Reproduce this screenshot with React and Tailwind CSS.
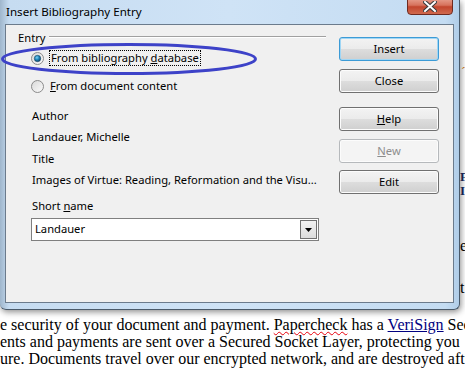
import React from "react";

const ui = { fontFamily: '"Noto Sans", "Open Sans", Arial, sans-serif' };
const doc = { fontFamily: '"Liberation Serif", "Times New Roman", serif' };

function Radio({ checked }) {
  return (
    <svg width="13" height="13" viewBox="0 0 13 13" className="shrink-0">
      <defs>
        <linearGradient id={checked ? "rg1" : "rg2"} x1="0" y1="0" x2="1" y2="1">
          <stop offset="0" stopColor="#d8d8d8" />
          <stop offset="1" stopColor="#fbfbfb" />
        </linearGradient>
        <radialGradient id="dot" cx="0.4" cy="0.35" r="0.7">
          <stop offset="0" stopColor="#7ad0f5" />
          <stop offset="0.5" stopColor="#1b84b8" />
          <stop offset="1" stopColor="#0d3a5c" />
        </radialGradient>
      </defs>
      <circle cx="6.5" cy="6.5" r="6" fill={`url(#${checked ? "rg1" : "rg2"})`} stroke="#8a8a8a" />
      {checked ? <circle cx="6.5" cy="6.5" r="3.2" fill="url(#dot)" stroke="#1a4a6a" strokeWidth="0.6" /> : null}
    </svg>
  );
}

function Button({ children, focused, disabled }) {
  const border = focused ? "border-[#3c9bd6]" : disabled ? "border-[#b6b9bc]" : "border-[#707070]";
  return (
    <div
      className={`flex h-[24px] w-[100px] items-center justify-center rounded-[3px] border ${border} ${
        disabled
          ? "bg-[#f4f4f4] text-[#8d8d8d]"
          : "bg-[linear-gradient(#f3f3f3_0%,#ebebeb_50%,#dddddd_51%,#cfcfcf_100%)] text-black"
      } ${focused ? "shadow-[inset_0_0_0_1px_#9fd6f5]" : "shadow-[inset_0_0_0_1px_#fcfcfc]"} text-[11.2px]`}
    >
      <span>{children}</span>
    </div>
  );
}

export default function App() {
  return (
    <div className="relative h-[370px] w-[465px] overflow-hidden bg-white" style={ui}>
      {/* document behind the dialog */}
      <div className="absolute left-0 top-[316px] text-[16px] leading-[17px] text-black whitespace-nowrap" style={doc}>
        <div>
          e security of your document and payment.{" "}
          <span className="underline decoration-wavy decoration-red-600 decoration-1">Papercheck</span> has a{" "}
          <span className="text-[#000080] underline">VeriSign</span> Sec
        </div>
        <div>ents and payments are sent over a Secured Socket Layer, protecting you</div>
        <div>ure. Documents travel over our encrypted network, and are destroyed aft</div>
      </div>
      <div className="absolute left-[461px] top-[62px] text-[14px] text-[#d08020]" style={doc}>ˊ</div>
      <div className="absolute left-[460px] top-[171px] text-[13px] leading-[12px] font-bold text-[#1a2a60]" style={doc}>F</div>
      <div className="absolute left-[460px] top-[185px] text-[13px] leading-[12px] font-bold text-[#1a2a60]" style={doc}>I</div>
      <div className="absolute left-[460px] top-[234px] text-[16px] text-black" style={doc}>e</div>
      <div className="absolute left-[460px] top-[276px] text-[16px] text-black" style={doc}>t</div>

      {/* dialog window */}
      <div className="absolute left-0 top-0 h-[310px] w-[460px] rounded-b-[6px] border-r border-b border-[#4a5a6a] bg-[linear-gradient(90deg,#9fb6cc_0%,#c6dcf1_2%,#cfe3f6_50%,#c4dcf2_97%,#b0cde8_100%)] shadow-[1px_2px_6px_rgba(0,0,0,0.45)]">
        <div className="flex h-[24px] items-center pl-[6px] text-[11.6px] text-black">Insert Bibliography Entry</div>

        {/* close button */}
        <div className="absolute left-[407px] top-[-3px] flex h-[18px] w-[46px] items-center justify-center rounded-b-[4px] border border-[#6e2a20] bg-[linear-gradient(#e8a493_0%,#d7725c_45%,#c2452d_55%,#d06a4e_100%)]">
          <svg width="14" height="11" viewBox="0 0 14 11">
            <path d="M2 1 L12 10 M12 1 L2 10" stroke="#3a3a3a" strokeWidth="4" strokeLinecap="square" />
            <path d="M2 1 L12 10 M12 1 L2 10" stroke="#ffffff" strokeWidth="2" strokeLinecap="square" />
          </svg>
        </div>

        {/* client area */}
        <div className="relative ml-[5px] flex h-[279px] w-[449px] border border-[#6b7b8c] bg-[#f0f0f0] text-[11.2px] text-black">
          <svg className="absolute left-[-6px] top-[18px]" width="262" height="34" viewBox="0 0 262 34">
            <ellipse cx="129" cy="16" rx="126.5" ry="14.5" fill="none" stroke="#3d42c8" strokeWidth="3" />
          </svg>

          <div className="flex w-[320px] flex-col pl-[12px] pt-[3px]">
            <div className="flex h-[20px] items-center gap-[3px]">
              <span>Entry</span>
              <div className="mt-[-2px] h-[2px] flex-1 border-t border-b border-t-[#a0a0a0] border-b-white" />
            </div>
            <div className="relative flex h-[20px] items-center gap-[5px] pl-[13px]">
              <Radio checked />
              <span className="border border-dotted border-black px-[1px] leading-[14px]">
                From bibliography <span className="underline">d</span>atabase
              </span>
            </div>
            <div className="mt-[8px] flex h-[20px] items-center gap-[6px] pl-[13px]">
              <Radio />
              <span>
                <span className="underline">F</span>rom document content
              </span>
            </div>
            <div className="mt-[10px] flex h-[20px] items-center pl-[14px]">Author</div>
            <div className="mt-[1px] flex h-[20px] items-center pl-[14px]">Landauer, Michelle</div>
            <div className="mt-[2px] flex h-[20px] items-center pl-[14px]">Title</div>
            <div className="mt-[1px] flex h-[20px] items-center pl-[14px] whitespace-nowrap">
              Images of Virtue: Reading, Reformation and the Visu...
            </div>
            <div className="mt-[6px] flex h-[20px] items-center pl-[14px]">
              <span>
                Short <span className="underline">n</span>ame
              </span>
            </div>
            <div className="ml-[13px] mt-[2px] flex h-[23px] w-[288px] items-center border border-[#7f7f7f] bg-white pl-[3px] pr-[1px]">
              <span className="flex-1">Landauer</span>
              <div className="flex h-[19px] w-[17px] items-center justify-center border border-[#707070] bg-[linear-gradient(#f2f2f2,#dcdcdc)]">
                <svg width="7" height="4" viewBox="0 0 7 4">
                  <path d="M0 0 H7 L3.5 4 Z" fill="#000" />
                </svg>
              </div>
            </div>
          </div>

          <div className="ml-[13px] flex flex-col pt-[12px]">
            <Button focused>Insert</Button>
            <div className="mt-[8px]">
              <Button>Close</Button>
            </div>
            <div className="mt-[14px]">
              <Button>
                <span className="underline">H</span>elp
              </Button>
            </div>
            <div className="mt-[8px]">
              <Button disabled>
                <span className="underline">N</span>ew
              </Button>
            </div>
            <div className="mt-[7px]">
              <Button>Edit</Button>
            </div>
          </div>
        </div>
      </div>
    </div>
  );
}
